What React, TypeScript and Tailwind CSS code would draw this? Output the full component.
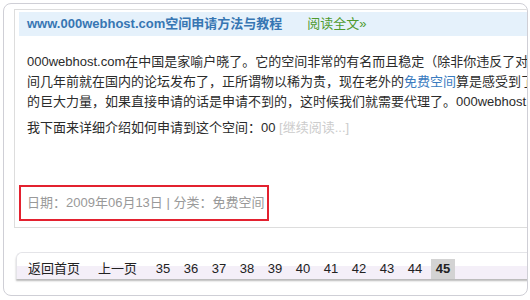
const PAGES = ['35', '36', '37', '38', '39', '40', '41', '42', '43', '44']

export default function App() {
  return (
    <div className="font-['Liberation_Sans','Noto_Sans_CJK_SC',sans-serif] text-[13px] text-[#2b2b2b]">
      <div className="m-[3px] w-[525px] h-[293px] overflow-hidden rounded-[8px] border border-[#cfcfd6] bg-white pl-[10px] pt-[5px]">
        {/* article */}
        <div className="w-[560px] border border-[#dddddd] px-[4px] pt-[2px] pb-[6px]">
          <div className="flex h-[24px] items-center bg-[#e5f1fb] pl-[8px]">
            <a href="#" className="font-bold text-[#3776b3] no-underline">www.000webhost.com空间申请方法与教程</a>
            <a href="#" className="ml-[25px] text-[#4f9a2e] no-underline">阅读全文»</a>
          </div>

          <p className="mt-[16px] whitespace-nowrap pl-[8px] leading-[20px]">
            000webhost.com在中国是家喻户晓了。它的空间非常的有名而且稳定（除非你违反了对方的规定），这个空
            <br />
            间几年前就在国内的论坛发布了，正所谓物以稀为贵，现在老外的<a href="#" className="text-[#3a7bbf]">免费空间</a>算是感受到了中国人
            <br />
            的巨大力量，如果直接申请的话是申请不到的，这时候我们就需要代理了。000webhost.com
          </p>
          <p className="mt-[6px] whitespace-nowrap pl-[8px] leading-[20px]">
            我下面来详细介绍如何申请到这个空间：00 <a href="#" className="text-[#cccccc]">[继续阅读...]</a>
          </p>

          <div className="mt-[47px] w-[250px] border-2 border-[#e3212f] py-[6px] pl-[6px] leading-[20px] text-[#999]">
            日期：2009年06月13日 | 分类：免费空间
          </div>
        </div>

        {/* pagination */}
        <div className="ml-[2px] mt-[24px] flex h-[27px] w-[540px] items-end gap-[4px] rounded-tl-[6px] border-t border-l border-[#e4e4e8] bg-[linear-gradient(to_bottom,#ffffff_0%,#ffffff_50%,#f4eff8_50%,#f4eff8_100%)] pl-[6px] shadow-[0_2px_2px_rgba(0,0,0,0.28)] text-[#222]">
          <a href="#" className="h-[20px] px-[5px] leading-[20px]">返回首页</a>
          <a href="#" className="ml-[4px] h-[20px] px-[5px] leading-[20px]">上一页</a>
          <div className="ml-[5px] flex gap-[4px]">
            {PAGES.map(p => (
              <a key={p} href="#" className="h-[20px] w-[24px] text-center leading-[20px]">{p}</a>
            ))}
            <span className="h-[20px] w-[24px] bg-[#d3d3d3] text-center font-bold leading-[20px]">45</span>
          </div>
        </div>
      </div>
    </div>
  )
}
